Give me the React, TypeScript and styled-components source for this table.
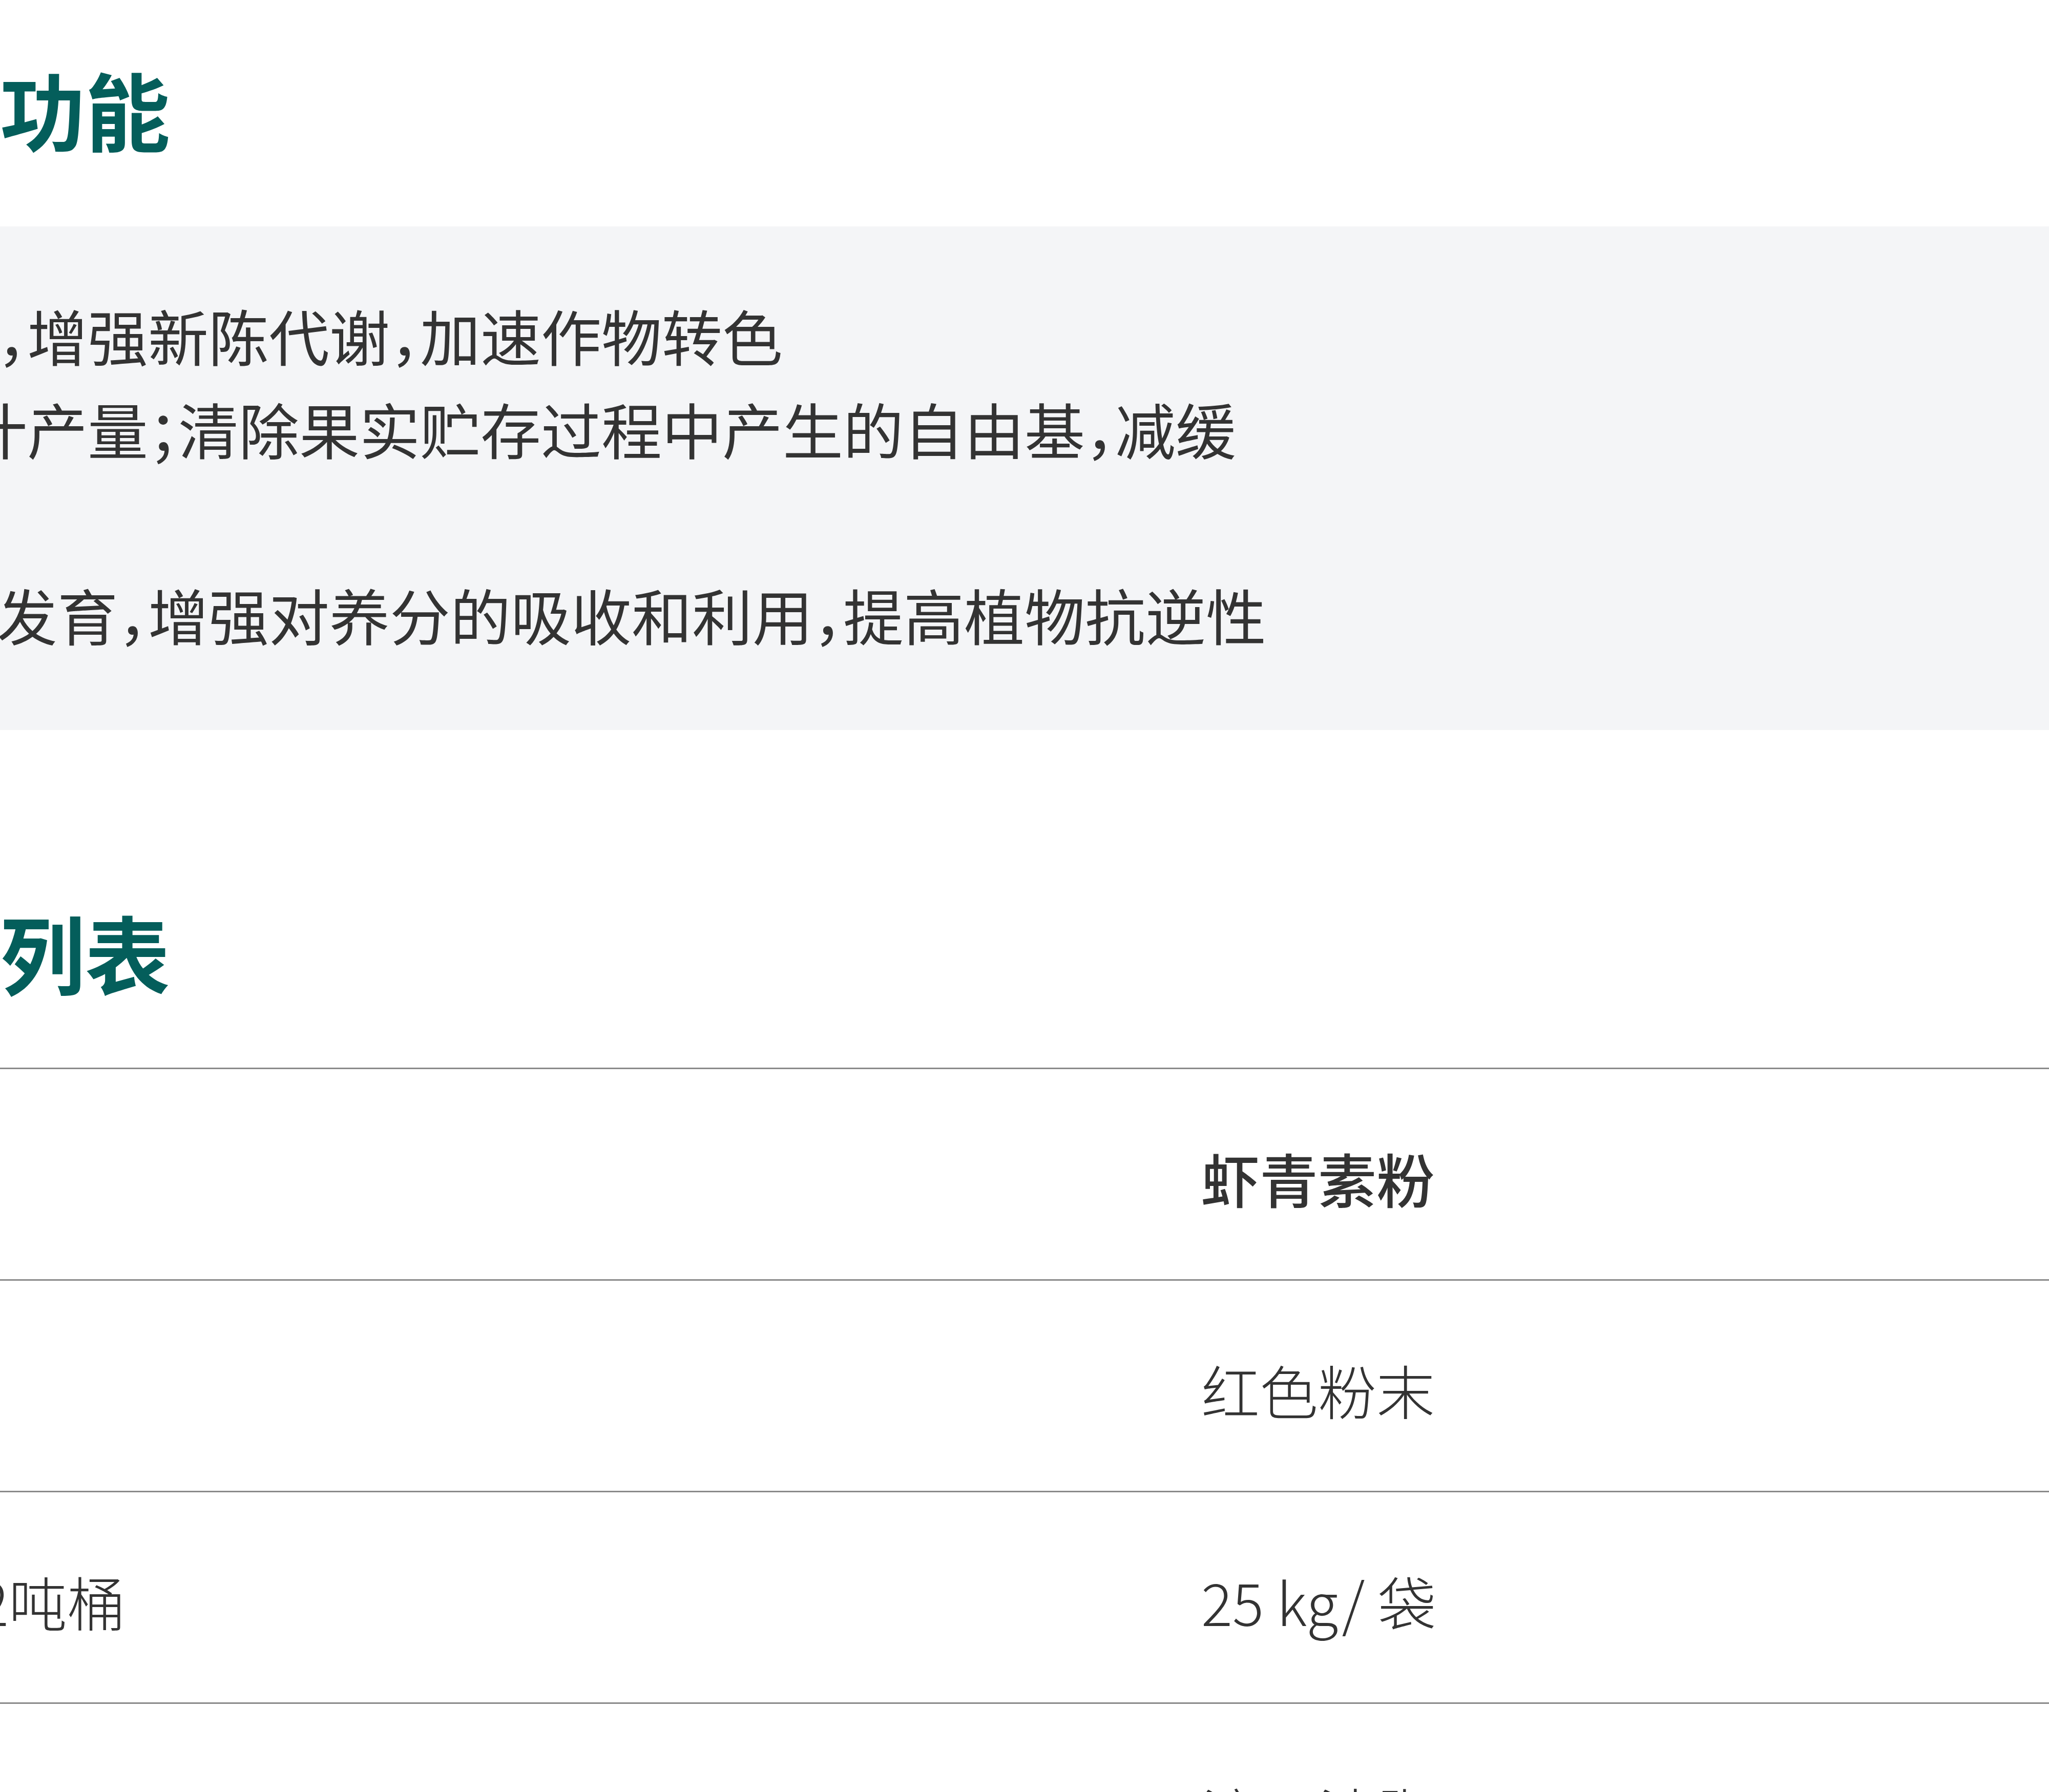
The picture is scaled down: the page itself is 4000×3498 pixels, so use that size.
import React from "react";
import styled, { createGlobalStyle } from "styled-components";

const GlobalStyle = createGlobalStyle`
  html, body {
    margin: 0;
    padding: 0;
    background: #fff;
    overflow: hidden;
  }
  body {
    font-family: "Noto Sans CJK SC", "Noto Sans", sans-serif;
    color: #333;
  }
`;

const Page = styled.div`
  width: 4000px;
  height: 3498px;
  overflow: hidden;
`;

const Content = styled.main`
  margin-left: -1070px;
  width: 5300px;
  padding-top: 86px;
`;

const SectionTitle = styled.h2<{ $gap: number }>`
  margin: ${(p) => p.$gap}px 0 0;
  padding-left: 738px;
  font-size: 166px;
  line-height: 250px;
  font-weight: 700;
  color: #045e5b;
  white-space: nowrap;
`;

const FeatureBox = styled.div`
  margin-top: 106px;
  background: #f4f5f7;
  padding: 121px 0 136px 120px;
`;

const FeatureList = styled.ul`
  list-style: none;
  margin: 0;
  padding: 0;
  width: 3450px;
  font-size: 118px;
  line-height: 181.5px;
  font-feature-settings: "halt";
`;

const FeatureItem = styled.li`
  margin: 0;
`;

const SpecTable = styled.div`
  margin-top: 102px;
`;

const SpecRow = styled.div<{ $head?: boolean }>`
  display: grid;
  grid-template-columns: 364px 3051px 1fr;
  align-items: center;
  box-sizing: border-box;
  height: 413px;
  padding-top: 12px;
  border-top: 3px solid #8a8a8a;
  font-size: 114px;
  font-weight: ${(p) => (p.$head ? 500 : 300)};
  color: #333;
`;

const SpecCell = styled.div`
  white-space: nowrap;
`;

const features = [
  "提高光合作用效率，增强新陈代谢，加速作物转色",
  "提高品质，增加果汁产量；清除果实贮存过程中产生的自由基，减缓果实衰老",
  "促进作物根系生长发育，增强对养分的吸收和利用，提高植物抗逆性",
];

const specs = [
  ["名称", "虾青素油", "虾青素粉"],
  ["外观", "红色液体", "红色粉末"],
  ["包装", "20 kg/ 桶，1.2吨桶", "25 kg/ 袋"],
  ["溶解性", "油溶性", "溶于油脂"],
];

function App() {
  return (
    <Page>
      <GlobalStyle />
      <Content>
        <SectionTitle $gap={0}>产品功能</SectionTitle>
        <FeatureBox>
          <FeatureList>
            {features.map((text) => (
              <FeatureItem key={text}>{text}</FeatureItem>
            ))}
          </FeatureList>
        </FeatureBox>

        <SectionTitle $gap={307}>产品列表</SectionTitle>
        <SpecTable>
          {specs.map((row, i) => (
            <SpecRow key={row[0]} $head={i === 0}>
              {row.map((cell) => (
                <SpecCell key={cell}>{cell}</SpecCell>
              ))}
            </SpecRow>
          ))}
        </SpecTable>
      </Content>
    </Page>
  );
}

export default App;
